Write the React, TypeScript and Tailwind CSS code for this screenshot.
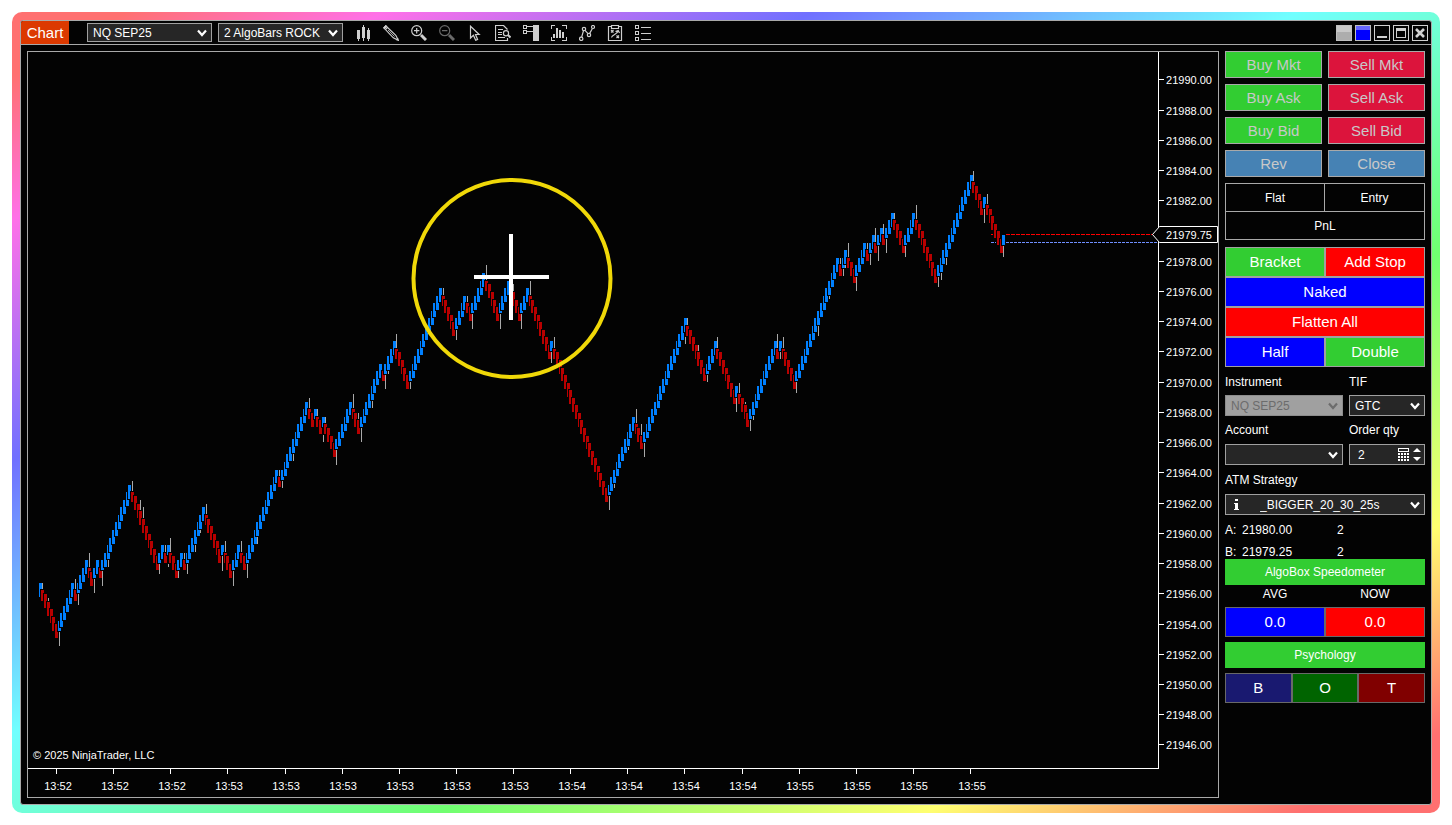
import type { ReactNode } from 'react';

const FONT = 'font-["Liberation_Sans",Arial,sans-serif]';

// Price scale: 21990.00 sits at y = 80, one tick is a quarter point
const TICK = 15.114 / 4;
const priceY = (price: number) => 80 + (21990 - price) * 4 * TICK;
const priceRow = (price: number) => Math.floor(priceY(price) - 0.1);

const START_PRICE = 21956.75;
const BAR_START = 40.15;
const BAR_STEP = 2.722;

// [bars in the swing, wick ticks beyond the previous extreme], first swing goes down
const swings: [number, number][] = [
  [6, 0], [6, 2], [1, 1], [4, 1], [2, 2], [2, 2], [1, 0], [11, 2], [10, 1], [2, 1],
  [1, 0], [1, 1], [3, 2], [2, 0], [1, 0], [7, 1], [6, 1], [1, 2], [3, 1], [3, 2],
  [2, 1], [12, 2], [1, 0], [10, 0], [2, 1], [1, 0], [2, 0], [1, 2], [4, 0], [6, 2],
  [3, 2], [8, 2], [1, 0], [4, 2], [5, 2], [12, 0], [5, 0], [4, 1], [2, 0], [5, 2],
  [5, 2], [4, 2], [4, 0], [3, 2], [8, 2], [1, 1], [20, 1], [10, 2], [3, 2], [16, 2],
  [7, 0], [4, 0], [7, 1], [1, 2], [4, 1], [10, 1], [1, 2], [1, 0], [5, 1], [16, 1],
  [1, 0], [2, 0], [3, 2], [4, 2], [1, 0], [2, 1], [1, 2], [2, 2], [1, 1], [3, 2],
  [4, 0], [4, 1], [8, 2], [13, 1], [4, 1], [1, 2], [6, 1], [1, 1]
];

// wick ticks on bars in the middle of a swing
const trendWicks: Record<number, number> = {
  3: 1, 25: 2, 37: 3, 38: 3, 57: 2, 59: 1, 80: 2, 93: 2, 117: 2, 122: 2, 128: 1,
  174: 2, 211: 1, 216: 1, 221: 3, 237: 3, 242: 2, 259: 1, 262: 1, 286: 3, 290: 1,
  296: 1, 331: 2, 333: 2
};

type Bar = { x: number; top: number; bottom: number; wickTop: number; wickBottom: number; up: boolean };

function buildBars(): Bar[] {
  const bars: Bar[] = [];
  let index = 0;

  const push = (high: number, low: number, wickHigh: number, wickLow: number, up: boolean) => {
    bars.push({
      x: Math.floor(BAR_START + BAR_STEP * index),
      top: Math.ceil(priceY(high) - 0.15),
      bottom: Math.floor(priceY(low) - 0.3),
      wickTop: Math.ceil(priceY(wickHigh) - 0.15),
      wickBottom: Math.floor(priceY(wickLow)),
      up
    });
    index += 1;
  };

  push(START_PRICE, START_PRICE - 1, START_PRICE, START_PRICE - 1, true);

  let extreme = START_PRICE;
  swings.forEach(([count, wick], swingIdx) => {
    const dir = swingIdx % 2 === 0 ? -1 : 1;
    for (let k = 1; k <= count; k++) {
      const close = extreme + dir * (3 + 2 * k) * 0.25;
      const open = k === 1 ? extreme + dir * 0.5 : close - dir;
      const extra = trendWicks[index] ?? 0;
      const tail = k === 1 ? extreme - dir * wick * 0.25 : open - dir * extra * 0.25;
      const high = Math.max(open, close);
      const low = Math.min(open, close);
      push(high, low, Math.max(high, tail), Math.min(low, tail), dir === 1);
    }
    extreme += dir * (3 + 2 * count) * 0.25;
  });
  return bars;
}

const bars = buildBars();
const prices = Array.from({ length: 23 }, (_, i) => 21990 - i * 2).filter((p) => p !== 21980);
const times = [
  '13:52', '13:52', '13:52', '13:53', '13:53', '13:53', '13:53', '13:53', '13:53',
  '13:54', '13:54', '13:54', '13:54', '13:55', '13:55', '13:55', '13:55'
];

function PriceChart() {
  return (
    <svg viewBox="28 52 1190 745" className={`block h-auto w-full text-[11px] ${FONT}`} role="img" aria-label="NQ SEP25 price chart">
      <g shapeRendering="crispEdges">
        <path d="M991 234.5h4M1006 234.5h147" stroke="#ff0000" strokeDasharray="4 1" />
        <path d="M991 242.5h6M1006 242.5h152" stroke="#6f8fff" strokeDasharray="3 1" />
        {bars.map((bar, idx) => (
          <g key={idx}>
            <rect x={bar.x} y={bar.wickTop} width={1} height={bar.wickBottom - bar.wickTop} fill="#a9a9a9" />
            <rect x={bar.x - 2} y={bar.top - 1} width={5} height={bar.bottom - bar.top + 2} fill="#030303" />
            <rect x={bar.x - 1} y={bar.top} width={3} height={bar.bottom - bar.top} fill={bar.up ? '#0080ff' : '#b80000'} />
          </g>
        ))}
        <path d="M1158.5 52V768.5H28" fill="none" stroke="#fff" />
        {prices.map((price) => (
          <rect key={price} x={1159} y={priceRow(price)} width={5} height={1} fill="#fff" />
        ))}
        {times.map((_, idx) => (
          <rect key={idx} x={Math.floor(56.5 + idx * 57.125)} y={769} width={1} height={5} fill="#fff" />
        ))}
      </g>

      <g fill="#fff">
        {prices.map((price) => (
          <text key={price} x={1189} y={priceRow(price) + 5} textAnchor="middle">
            {price.toFixed(2)}
          </text>
        ))}
        {times.map((time, idx) => (
          <text key={idx} x={Math.round(57.5 + idx * 57.125)} y={790} textAnchor="middle">
            {time}
          </text>
        ))}
        <text x={33} y={759}>© 2025 NinjaTrader, LLC</text>
      </g>

      <path d="M1152.5 234.5L1159.5 226.5H1217.5V242.5H1159.5Z" fill="#030303" stroke="#fff" />
      <text x={1189} y={239} textAnchor="middle" fill="#fff">21979.75</text>

      <circle cx={512} cy={278.5} r={98.5} fill="none" stroke="#f0d808" strokeWidth={4} />
      <path d="M509 234h4v86h-4zM474 275h75v4h-75z" fill="#fff" shapeRendering="crispEdges" />
    </svg>
  );
}

function Chevron({ className = '' }: { className?: string }) {
  return (
    <svg viewBox="0 0 10 8" className={`pointer-events-none absolute top-1/2 right-[5px] h-2 w-[10px] -translate-y-1/2 ${className}`} fill="none" stroke="currentColor" strokeWidth="2.2" aria-hidden="true">
      <path d="M1 1.5L5 6L9 1.5" />
    </svg>
  );
}

type PickerProps = { id: string; label?: string; value: string; className: string; textClass?: string; disabled?: boolean; children?: ReactNode };

function Picker({ id, label, value, className, textClass = 'pl-[5px]', disabled, children }: PickerProps) {
  const colors = disabled ? 'border-[#8c8c8c] bg-[#a0a0a0] text-[#6c6c6c]' : 'border-[#a0a0a0] bg-[#262626] text-white';
  return (
    <div className={`relative ${className}`}>
      {children}
      <select id={id} aria-label={label} disabled={disabled} defaultValue={value} className={`block h-full w-full appearance-none border text-xs leading-4 opacity-100 outline-none ${colors} ${textClass}`}>
        <option value={value}>{value}</option>
      </select>
      <Chevron className={disabled ? 'text-[#6c6c6c]' : 'text-white'} />
    </div>
  );
}

const tools: { name: string; dim?: boolean; art: ReactNode }[] = [
  {
    name: 'Chart style',
    art: <path fill="currentColor" stroke="none" shapeRendering="crispEdges" d="M2 5h3v9H4v2H3v-2H2zM8 0h1v2h1v11H9v3H8v-3H7V2h1zM13 3h1v2h1v9h-1v2h-1v-2h-1V5h1z" />
  },
  {
    name: 'Drawing tools',
    art: (
      <>
        <path d="M.8 2.8L2.8.8L12.8 10.3L15.3 15.3L10.3 12.8Z" />
        <path d="M2.6 4.4L4.4 2.6" />
        <path d="M5 5L11.5 11.5" strokeWidth=".8" />
        <path d="M13 15.3L15.3 13V15.3Z" fill="currentColor" stroke="none" />
        <path d="M.8 2.8L2.8.8L3.5 1.5L1.5 3.5Z" fill="currentColor" />
      </>
    )
  },
  {
    name: 'Zoom in',
    art: (
      <>
        <circle cx="5.7" cy="5.7" r="5" />
        <path d="M3 5.7h5.4M5.7 3v5.4" />
        <path d="M10 10L15 15" strokeWidth="3" />
      </>
    )
  },
  {
    name: 'Zoom out',
    dim: true,
    art: (
      <>
        <circle cx="5.7" cy="5.7" r="5" />
        <path d="M3 5.7h5.4" />
        <path d="M10 10L15 15" strokeWidth="3" />
      </>
    )
  },
  { name: 'Pointer', art: <path d="M3.5 1.2V13L6.4 10.2L8.7 15.3L10.6 14.4L8.5 9.5H12.2Z" /> },
  {
    name: 'Data box',
    art: (
      <>
        <path d="M12.5 4.5L8.5.5H.5V15.5H12.5V13" />
        <path d="M3 4.5h5M3 7.5h4M3 9.5h4M3 12.5h7" />
        <circle cx="11" cy="8.2" r="2.6" />
        <path d="M13 10L15.5 12.5" strokeWidth="2" />
      </>
    )
  },
  {
    name: 'Chart trader',
    art: (
      <g shapeRendering="crispEdges">
        <path d="M.5.5h3v3h-3zM.5 5.5h3v3h-3zM4 1.5h6M4 6.5h6" />
        <path d="M10 0h6v16h-6z" fill="currentColor" stroke="none" />
      </g>
    )
  },
  {
    name: 'Data series',
    art: (
      <g shapeRendering="crispEdges">
        <path d="M4 .5H.5V4M11 .5h4.5V4M.5 12v3.5H4M11 15.5h4.5V12" />
        <path d="M2 9h2v4H2zM5 3h2v10H5zM8 5h2v8H8zM11 7h2v6h-2z" fill="currentColor" stroke="none" />
      </g>
    )
  },
  {
    name: 'Indicators',
    art: (
      <>
        <circle cx="2.2" cy="13.8" r="1.7" />
        <circle cx="5" cy="4" r="1.7" />
        <circle cx="10" cy="10" r="1.7" />
        <circle cx="14" cy="2" r="1.5" />
        <path d="M2.7 12L4.5 5.7M6 5.4L9 8.7M10.7 8.4L13.4 3.5" />
      </>
    )
  },
  {
    name: 'Strategies',
    art: (
      <>
        <path d="M4 1.5H1.5V15.5H14.5V1.5H12M4.5.5h7v3h-7z" />
        <path d="M4 5L6.5 7.5M6.5 5L4 7.5M9.5 10.5L12 13M12 10.5L9.5 13M4.5 12.5C5 9.5 10 10 11 6M8.5 6.5L11.2 5.5L12.5 8" />
      </>
    )
  },
  {
    name: 'Properties',
    art: (
      <g shapeRendering="crispEdges">
        <path d="M.5.5h3v3h-3zM.5 6.5h3v3h-3zM.5 12.5h3v3h-3zM6 2.5h10M6 8.5h10M6 14.5h10" />
      </g>
    )
  }
];

function Toolbar() {
  return (
    <header className="flex h-6 items-center border-b border-[#a9a9a9]">
      <div className="flex h-full w-12 items-center justify-center bg-[#dc3900] pt-0.5 text-[15px] text-white">Chart</div>
      <Picker id="symbol" label="Symbol" value="NQ SEP25" className="ml-[18px] h-[19px] w-[125px]" />
      <Picker id="bar-type" label="Bar type" value="2 AlgoBars ROCK" className="ml-1.5 h-[19px] w-[125px]" />
      <div className="ml-1.5 flex text-[#cfcfcf]">
        {tools.map((tool) => (
          <button key={tool.name} type="button" aria-label={tool.name} className="flex w-7 justify-center">
            <svg viewBox="0 0 16 16" className={`h-4 w-4 ${tool.dim ? 'text-[#6a6a6a]' : ''}`} fill="none" stroke="currentColor" strokeWidth="1.2">
              {tool.art}
            </svg>
          </button>
        ))}
      </div>
      <div className="mr-[3px] ml-auto flex gap-[3px] text-[#d0d0d0]">
        <button type="button" aria-label="Instrument link" className="h-4 w-4 border border-[#c0c0c0] bg-linear-to-b from-[#c8c8c8] from-40% to-[#adadad] to-40%" />
        <button type="button" aria-label="Interval link" className="h-4 w-4 border border-[#c0c0c0] bg-linear-to-b from-[#6666ff] from-30% to-[#0000ff] to-30%" />
        <button type="button" aria-label="Minimize" className="h-4 w-4 border border-current">
          <svg viewBox="0 0 14 14" className="block" fill="currentColor"><path d="M2 10h10v2H2z" /></svg>
        </button>
        <button type="button" aria-label="Maximize" className="h-4 w-4 border border-current">
          <svg viewBox="0 0 14 14" className="block" fill="currentColor"><path fillRule="evenodd" d="M2 2h10v10H2zM3 5v6h8V5z" /></svg>
        </button>
        <button type="button" aria-label="Close window" className="h-4 w-4 border border-current">
          <svg viewBox="0 0 14 14" className="block" stroke="currentColor" strokeWidth="2.6"><path d="M3 3L11 11M11 3L3 11" /></svg>
        </button>
      </div>
    </header>
  );
}

const orderButtons = [
  { label: 'Buy Mkt', color: 'bg-[#32cd32]' },
  { label: 'Sell Mkt', color: 'bg-[#dc143c]' },
  { label: 'Buy Ask', color: 'bg-[#32cd32]' },
  { label: 'Sell Ask', color: 'bg-[#dc143c]' },
  { label: 'Buy Bid', color: 'bg-[#32cd32]' },
  { label: 'Sell Bid', color: 'bg-[#dc143c]' },
  { label: 'Rev', color: 'bg-[#4682b4]' },
  { label: 'Close', color: 'bg-[#4682b4]' }
];

const quickButtons = [
  { label: 'Bracket', color: 'bg-[#32cd32]' },
  { label: 'Add Stop', color: 'bg-[#ff0000]' },
  { label: 'Naked', color: 'col-span-2 bg-[#0000ff]' },
  { label: 'Flatten All', color: 'col-span-2 bg-[#ff0000]' },
  { label: 'Half', color: 'bg-[#0000ff]' },
  { label: 'Double', color: 'bg-[#32cd32]' }
];

const moodButtons = [
  { label: 'B', color: 'bg-[#191970]' },
  { label: 'O', color: 'bg-[#006400]' },
  { label: 'T', color: 'bg-[#800000]' }
];

function TradePanel() {
  return (
    <aside className="w-[200px] shrink-0 text-xs leading-4 text-white">
      <div className="grid grid-cols-2 gap-1.5">
        {orderButtons.map((btn) => (
          <button key={btn.label} type="button" className={`h-[27px] border border-[#a9a9a9] text-[15px] text-[#c8c8c8] ${btn.color}`}>
            {btn.label}
          </button>
        ))}
      </div>

      <div className="mt-1.5 grid grid-cols-2 border border-[#a9a9a9] text-center leading-[29px]">
        <div className="h-[27px] border-r border-[#a9a9a9]">Flat</div>
        <div className="h-[27px]">Entry</div>
        <div className="col-span-2 h-7 border-t border-[#a9a9a9]">PnL</div>
      </div>

      <div className="mt-[7px] grid grid-cols-2">
        {quickButtons.map((btn) => (
          <button key={btn.label} type="button" className={`h-[30px] border border-[#a0a0a0] text-[15px] ${btn.color}`}>
            {btn.label}
          </button>
        ))}
      </div>

      <div className="grid grid-cols-[118px_76px] gap-x-1.5">
        <label htmlFor="instrument" className="h-7 leading-[30px]">Instrument</label>
        <label htmlFor="tif" className="h-7 leading-[30px]">TIF</label>
        <Picker id="instrument" value="NQ SEP25" disabled className="h-[21px]" />
        <Picker id="tif" value="GTC" className="h-[21px]" />
        <label htmlFor="account" className="leading-7">Account</label>
        <label htmlFor="qty" className="leading-7">Order qty</label>
        <Picker id="account" value="" className="h-[21px]" />
        <div className="flex h-[21px] items-center border border-[#a0a0a0] bg-[#262626] pr-[3px] pl-2">
          <input id="qty" defaultValue="2" className="w-0 min-w-0 flex-1 bg-transparent outline-none" />
          <button type="button" aria-label="Calculator" className="mr-1">
            <svg viewBox="0 0 11 13" className="block h-[13px] w-[11px]" fill="currentColor" shapeRendering="crispEdges">
              <path fillRule="evenodd" d="M0 0h11v4H0zM1 1v2h9V1z" />
              <path d="M0 5h2v2H0zM3 5h2v2H3zM6 5h2v2H6zM9 5h2v2H9zM0 8h2v2H0zM3 8h2v2H3zM6 8h2v2H6zM9 8h2v2H9zM0 11h2v2H0zM3 11h2v2H3zM6 11h2v2H6zM9 11h2v2H9z" />
            </svg>
          </button>
          <div className="flex flex-col gap-[5px]">
            <button type="button" aria-label="Increase quantity">
              <svg viewBox="0 0 8 4" className="block h-1 w-2" fill="currentColor"><path d="M0 4L4 0L8 4z" /></svg>
            </button>
            <button type="button" aria-label="Decrease quantity">
              <svg viewBox="0 0 8 4" className="block h-1 w-2" fill="currentColor"><path d="M0 0L4 4L8 0z" /></svg>
            </button>
          </div>
        </div>
      </div>

      <label htmlFor="atm" className="block h-[29px] leading-[30px]">ATM Strategy</label>
      <Picker id="atm" value="_BIGGER_20_30_25s" className="h-[21px]" textClass="pl-[34px]">
        <svg viewBox="0 0 5 11" className="pointer-events-none absolute top-[5px] left-[9px] h-[11px] w-[5px]" fill="currentColor" aria-hidden="true">
          <path d="M1 0h3v2H1zM0 4h4v6h1v1H0v-1h1V5H0z" />
        </svg>
      </Picker>

      <div className="grid h-11 grid-cols-[17px_95px_1fr] content-start gap-y-1.5 pt-[7px]">
        <span>A:</span>
        <span>21980.00</span>
        <span>2</span>
        <span>B:</span>
        <span>21979.25</span>
        <span>2</span>
      </div>

      <button type="button" className="block h-[26px] w-full bg-[#32cd32]">AlgoBox Speedometer</button>
      <div className="grid grid-cols-2 pb-1 text-center leading-[18px]">
        <span>AVG</span>
        <span>NOW</span>
      </div>
      <div className="grid grid-cols-2 text-center text-[15px] leading-7">
        <div className="border border-[#696969] bg-[#0000ff]">0.0</div>
        <div className="border border-[#696969] bg-[#ff0000]">0.0</div>
      </div>

      <button type="button" className="mt-[5px] block h-[26px] w-full bg-[#32cd32]">Psychology</button>
      <div className="mt-[5px] grid grid-cols-3">
        {moodButtons.map((btn) => (
          <button key={btn.label} type="button" className={`h-[30px] border border-[#696969] text-[15px] ${btn.color}`}>
            {btn.label}
          </button>
        ))}
      </div>
    </aside>
  );
}

export default function App() {
  return (
    <div className={`min-h-screen bg-white p-3 ${FONT}`}>
      <div className="rounded-[10px] bg-[linear-gradient(to_bottom_right,#ff7070_4%,#ff70e8_13%,#7070ff_28%,#70ffff_45%,#70ff70_65%,#ffff70_82%,#ff7070_95%)] p-2">
        <div className="overflow-hidden rounded-[3px] border border-[#a9a9a9] bg-[#030303]">
          <Toolbar />
          <main className="flex items-start gap-1.5 p-1.5">
            <div className="min-w-0 flex-1 border border-[#a9a9a9]">
              <PriceChart />
            </div>
            <TradePanel />
          </main>
        </div>
      </div>
    </div>
  );
}
